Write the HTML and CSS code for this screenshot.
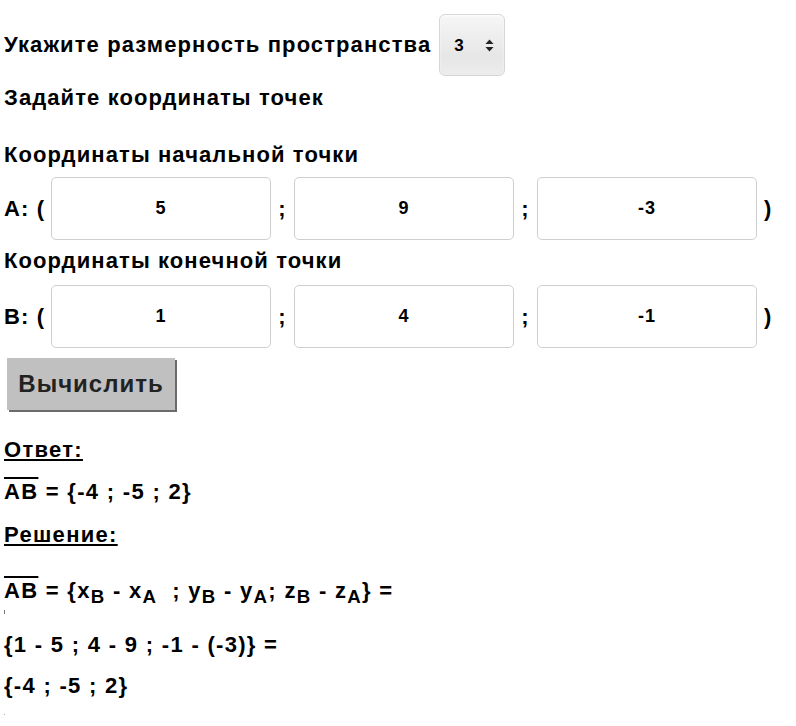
FILE: index.html
```html
<!DOCTYPE html>
<html lang="ru">
<head>
    <meta charset="UTF-8">
    <title>Координаты вектора</title>
    <link rel="stylesheet" href="styles.css">
</head>
<body>

    <form class="calc">
        <div class="dim-row">
            <label for="dim">Укажите размерность пространства</label>
            <div class="select-box">
                <select id="dim">
                    <option>2</option>
                    <option selected>3</option>
                </select>
                <svg class="arrows" width="9" height="13" viewBox="0 0 9 13">
                    <path d="M4.5 0.5 L8.5 5 L0.5 5 Z" fill="#222"/>
                    <path d="M4.5 12.5 L8.5 8 L0.5 8 Z" fill="#222"/>
                </svg>
            </div>
        </div>

        <p class="caption first">Задайте координаты точек</p>

        <p class="caption start">Координаты начальной точки</p>
        <div class="point-row">
            <span class="name">A: (</span>
            <input type="text" value="5">
            <span class="sep">;</span>
            <input type="text" value="9">
            <span class="sep">;</span>
            <input type="text" value="-3">
            <span class="close">)</span>
        </div>

        <p class="caption end">Координаты конечной точки</p>
        <div class="point-row">
            <span class="name">B: (</span>
            <input type="text" value="1">
            <span class="sep">;</span>
            <input type="text" value="4">
            <span class="sep">;</span>
            <input type="text" value="-1">
            <span class="close">)</span>
        </div>

        <button type="button" class="calc-btn">Вычислить</button>
    </form>

    <div class="result">
        <p class="head answer">Ответ:</p>
        <p class="line vec-line"><span class="vec">AB</span> = {-4 ; -5 ; 2}</p>
        <p class="head solution">Решение:</p>

        <p class="line formula"><span class="vec">AB</span> = {x<sub>B</sub> - x<sub>A</sub> &nbsp;; y<sub>B</sub> - y<sub>A</sub>; z<sub>B</sub> - z<sub>A</sub>} =</p>
        <span class="tick"></span>
        <p class="line step first-step">{1 - 5 ; 4 - 9 ; -1 - (-3)} =</p>
        <p class="line step">{-4 ; -5 ; 2}</p>
        <span class="dot"></span>
    </div>

</body>
</html>
```

FILE: styles.css
```css
body {
    font-family: "Liberation Sans", Arial, sans-serif;
    font-weight: bold;
    letter-spacing: 1.1px;
    color: #000;
    background: #fff;
    margin: 0;
    padding: 14px 0 0 4px;
}

p {
    margin: 0;
}

/* form */
.dim-row {
    display: flex;
    align-items: center;
    gap: 8px;
    height: 62px;
    font-size: 22px;
}

.select-box {
    position: relative;
    width: 66px;
    height: 62px;
}

.select-box select {
    appearance: none;
    -webkit-appearance: none;
    width: 100%;
    height: 100%;
    border: 1px solid #d6d6d6;
    border-radius: 6px;
    background: linear-gradient(#f6f6f6, #e6e6e6 70%, #ededed);
    box-shadow: inset 0 1px 2px rgba(255, 255, 255, 0.9);
    font-family: "Liberation Sans", Arial, sans-serif;
    font-weight: bold;
    font-size: 17px;
    color: #000;
    padding: 0 0 0 14px;
}

.arrows {
    position: absolute;
    right: 11px;
    top: 25px;
}

.caption {
    font-size: 22px;
    line-height: 22px;
}

.first {
    margin-top: 11px;
}

.start {
    margin-top: 35px;
}

.end {
    margin-top: 10px;
}

.point-row {
    display: flex;
    align-items: center;
    margin-top: 11px;
    font-size: 22px;
}

.caption.end + .point-row {
    margin-top: 13px;
}

.point-row .name {
    width: 47px;
    white-space: nowrap;
}

.point-row input {
    width: 220px;
    height: 63px;
    box-sizing: border-box;
    border: 1px solid #cfcfcf;
    border-radius: 5px;
    text-align: center;
    font-family: "Liberation Sans", Arial, sans-serif;
    font-weight: bold;
    font-size: 18px;
    letter-spacing: 1px;
    color: #000;
    padding: 0;
}

.point-row .sep {
    width: 23px;
    text-align: center;
}

.point-row .close {
    padding-left: 7px;
}

.calc-btn {
    display: block;
    margin: 10px 0 0 3px;
    width: 168px;
    height: 52px;
    background: #c0c0c0;
    border: none;
    box-shadow: 2px 2px 0 #6b6b6b;
    font-family: "Liberation Sans", Arial, sans-serif;
    font-weight: bold;
    font-size: 24px;
    letter-spacing: 1px;
    color: #222;
    padding: 0;
}

/* result */
.result {
    font-size: 22px;
    letter-spacing: 1.3px;
}

.head {
    text-decoration: underline;
    line-height: 22px;
}

.answer {
    margin-top: 29px;
}

.vec-line {
    margin-top: 20px;
}

.solution {
    margin-top: 21px;
}

.line {
    line-height: 22px;
}

.formula {
    margin-top: 34px;
}

.step {
    margin-top: 19px;
}

.first-step {
    margin-top: 20px;
}

.vec {
    text-decoration: overline;
}

sub {
    font-size: 0.85em;
    vertical-align: -5px;
    line-height: 0;
}

.tick {
    display: block;
    width: 1px;
    height: 4px;
    background: #777;
    margin-top: 8px;
}

.dot {
    display: block;
    width: 1px;
    height: 1px;
    background: #aaa;
    margin-top: 17px;
}
```
